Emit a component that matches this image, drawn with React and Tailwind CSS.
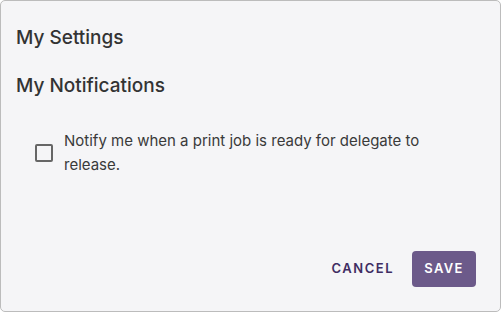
export default function App() {
    return (
        <div className="w-[501px] h-[312px] bg-white font-['Inter',sans-serif]">
            <div className="w-full h-full border border-[#bcbcbc] rounded-[5px] bg-[#f5f5f7] flex flex-col">
                <h1 className="text-[19px] text-[#333333] font-medium pl-[15px] pt-[25px] leading-[24px]">My Settings</h1>
                <h2 className="text-[19px] text-[#333333] font-medium pl-[15px] pt-[24px] leading-[24px]">My Notifications</h2>
                <label className="flex items-center pl-[34px] pr-[60px] pt-[31px] gap-[11px]">
                    <span className="w-[18px] h-[18px] shrink-0 border-2 border-[#666666] rounded-[2px]"></span>
                    <span className="text-[15px] text-[#3a3a3a] leading-[24px]">Notify me when a print job is ready for delegate to release.</span>
                </label>
                <div className="mt-auto flex justify-end items-center gap-[16px] pr-[24px] pb-[24px]">
                    <button className="text-[13px] font-semibold tracking-[1.5px] text-[#3f2d63] px-[2px] h-[36px]">CANCEL</button>
                    <button className="w-[64px] h-[36px] rounded-[4px] bg-[#6c5a8a] text-white text-[13px] font-semibold tracking-[1.3px]">SAVE</button>
                </div>
            </div>
        </div>
    )
}
